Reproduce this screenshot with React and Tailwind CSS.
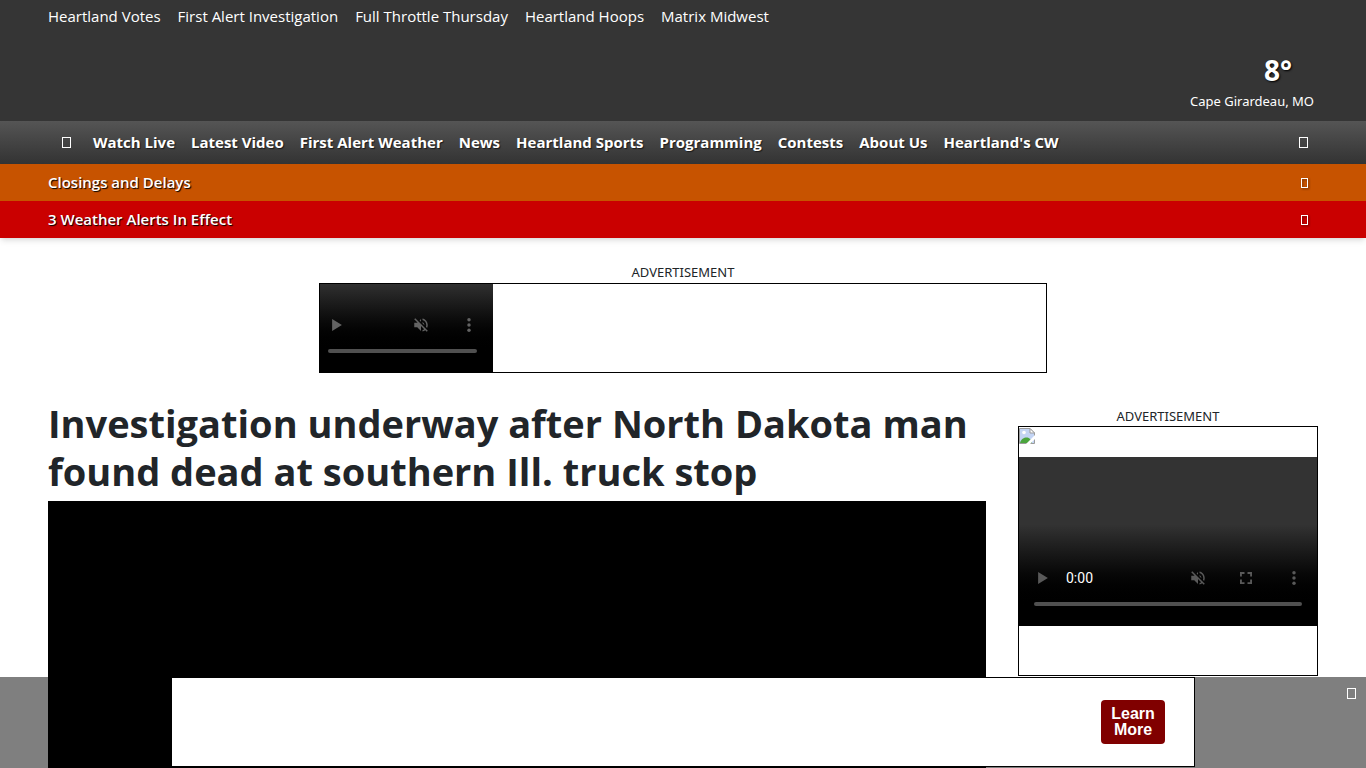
const topLinks = [
  "Heartland Votes",
  "First Alert Investigation",
  "Full Throttle Thursday",
  "Heartland Hoops",
  "Matrix Midwest",
];

const navLinks = [
  "Watch Live",
  "Latest Video",
  "First Alert Weather",
  "News",
  "Heartland Sports",
  "Programming",
  "Contests",
  "About Us",
  "Heartland's CW",
];

// Empty glyph box
function BoxGlyph({ className = "" }) {
  return (
    <svg className={className} width="9" height="11" viewBox="0 0 9 11" fill="none" stroke="currentColor">
      <rect x="0.5" y="0.5" width="8" height="10" />
    </svg>
  );
}

function SmallBoxGlyph() {
  return (
    <svg
      className="drop-shadow-[1px_1px_1px_rgba(0,0,0,0.5)]"
      width="7"
      height="10"
      viewBox="0 0 7 10"
      fill="none"
      stroke="currentColor"
    >
      <rect x="0.5" y="0.5" width="6" height="9" />
    </svg>
  );
}

function PlayIcon() {
  return (
    <svg width="18" height="18" viewBox="0 0 24 24" fill="currentColor">
      <path d="M5.500 4v16l13-8z" />
    </svg>
  );
}

function MutedIcon() {
  return (
    <svg width="18" height="18" viewBox="0 0 24 24" fill="currentColor">
      <path d="M4.34 2.93 2.93 4.34 7.29 8.7 7 9H3v6h4l5 5v-6.59l4.18 4.18c-.65.49-1.38.88-2.18 1.11v2.06a8.94 8.94 0 0 0 3.61-1.75l2.05 2.05 1.41-1.41L4.34 2.93zM19 12c0 .82-.15 1.61-.41 2.34l1.53 1.53c.56-1.17.88-2.48.88-3.87 0-4.28-2.99-7.86-7-8.77v2.06c2.89.86 5 3.54 5 6.71zm-7-8-1.88 1.88L12 7.76V4zm4.500 8A4.500 4.500 0 0 0 14 7.97v1.79l2.480 2.480c.01-.08.02-.16.02-.24z" />
    </svg>
  );
}

function FullscreenIcon() {
  return (
    <svg width="18" height="18" viewBox="0 0 24 24" fill="currentColor">
      <path d="M4 4h6v2.500H6.500V10H4zM14 4h6v6h-2.500V6.500H14zM4 14h2.500v3.500H10V20H4zM17.500 14H20v6h-6v-2.500h3.500z" />
    </svg>
  );
}

function MoreIcon() {
  return (
    <svg width="18" height="18" viewBox="0 0 24 24" fill="currentColor">
      <circle cx="12" cy="5" r="2.300" />
      <circle cx="12" cy="12" r="2.300" />
      <circle cx="12" cy="19" r="2.300" />
    </svg>
  );
}

function BrokenImage() {
  return (
    <svg width="16" height="16" viewBox="0 0 16 16" role="img" aria-label="Advertisement">
      <path d="M.5.5H11l4.500 4.500v10.500H.5z" fill="#c3d4f4" stroke="#9b9b9b" />
      <path d="M11 .5V5h4.500z" fill="#fff" stroke="#9b9b9b" />
      <circle cx="5" cy="4.500" r="1.800" fill="#fff" />
      <path d="M1 15c1-4 4-5.500 6.500-5.500S12 11 13 15z" fill="#4ba53e" />
      <path d="M16 7 7 16h4l5-5z" fill="#fff" />
    </svg>
  );
}

function ControlButton({ label, children }) {
  return (
    <button type="button" aria-label={label} className="flex size-8 items-center justify-center">
      {children}
    </button>
  );
}

function AlertBar({ label, className }) {
  return (
    <div className={`flex h-[37px] items-center justify-between pr-[58px] pl-12 ${className}`}>
      <a href="#" className="text-[15px] font-semibold text-shadow-[1px_1px_1px_rgb(0_0_0)]">
        {label}
      </a>
      <button type="button" aria-label={`Close ${label}`}>
        <SmallBoxGlyph />
      </button>
    </div>
  );
}

function Header() {
  return (
    <header className="bg-[#353535] text-white shadow-md">
      <div className="flex h-[121px] flex-col justify-between pr-[52px] pb-[9px] pl-12">
        <nav aria-label="Featured" className="flex h-8 items-center gap-[17px] text-[15px]">
          {topLinks.map((link) => (
            <a key={link} href="#">{link}</a>
          ))}
        </nav>
        <a href="#" className="flex flex-col self-end">
          <span className="self-end pr-[22px] text-[28px] leading-10 font-bold text-shadow-[1px_1px_2px_rgb(0_0_0)]">8°</span>
          <span className="font-['Noto_Sans',sans-serif] text-[13px] leading-[22px]">Cape Girardeau, MO</span>
        </a>
      </div>
      <div className="flex h-[43px] items-center justify-between bg-linear-to-b from-[#555] to-[#333] pr-[58px] pl-[62px]">
        <nav aria-label="Main" className="flex items-center gap-4 text-[15px] font-bold text-shadow-[1px_1px_1px_rgb(0_0_0/0.6)]">
          <a href="#" aria-label="Home" className="pr-1.5">
            <BoxGlyph />
          </a>
          {navLinks.map((link) => (
            <a key={link} href="#">{link}</a>
          ))}
        </nav>
        <button type="button" aria-label="Search">
          <BoxGlyph />
        </button>
      </div>
      <AlertBar label="Closings and Delays" className="bg-[#c75300]" />
      <AlertBar label="3 Weather Alerts In Effect" className="bg-[#ca0000]" />
    </header>
  );
}

function BannerAd() {
  return (
    <section className="mx-auto w-full max-w-[728px] pt-6">
      <p className="text-center font-['Noto_Sans',sans-serif] text-[13px] leading-[21px]">ADVERTISEMENT</p>
      <div className="h-[90px] border border-black">
        <div className="flex h-full w-[173px] flex-col justify-end bg-linear-to-b from-[#303030] to-black to-80% pb-[19px] text-[#636363]">
          <div className="flex items-center justify-between px-px">
            <ControlButton label="Play"><PlayIcon /></ControlButton>
            <div className="flex gap-4 pr-[7px]">
              <ControlButton label="Unmute"><MutedIcon /></ControlButton>
              <ControlButton label="More options"><MoreIcon /></ControlButton>
            </div>
          </div>
          <div className="mx-2 mt-2 mr-4 h-1 rounded-full bg-[#505050]" />
        </div>
      </div>
    </section>
  );
}

function SidebarAd() {
  return (
    <aside className="w-[300px] shrink-0 pt-[7px]">
      <p className="text-center font-['Noto_Sans',sans-serif] text-[13px] leading-5">ADVERTISEMENT</p>
      <div className="h-[250px] border border-black">
        <div className="h-[30px] pt-px">
          <BrokenImage />
        </div>
        <div className="flex h-[169px] flex-col justify-end bg-linear-to-b from-[#333] from-40% to-black to-90% pb-5 text-[#595959]">
          <div className="flex items-center justify-between pr-[7px] pl-2">
            <div className="flex items-center gap-[7px]">
              <ControlButton label="Play"><PlayIcon /></ControlButton>
              <span className="font-[Roboto,sans-serif] text-sm text-white">0:00</span>
            </div>
            <div className="flex gap-4">
              <ControlButton label="Unmute"><MutedIcon /></ControlButton>
              <ControlButton label="Full screen"><FullscreenIcon /></ControlButton>
              <ControlButton label="More options"><MoreIcon /></ControlButton>
            </div>
          </div>
          <div className="mx-[15px] mt-2 h-1 rounded-full bg-[#505050]" />
        </div>
      </div>
    </aside>
  );
}

function StickyAd() {
  return (
    <div className="fixed inset-x-0 bottom-0 bg-black/50 pb-px">
      <div className="mx-auto flex h-[90px] max-w-[1024px] items-center justify-end border border-black bg-white pr-[29px]">
        <a
          href="#"
          className="w-16 rounded bg-[#800000] px-2 py-1.5 text-center font-['Liberation_Sans',sans-serif] text-base leading-4 font-bold text-white"
        >
          Learn More
        </a>
      </div>
      <button type="button" aria-label="Close ad" className="absolute top-[11px] right-[10px] text-white">
        <BoxGlyph />
      </button>
    </div>
  );
}

export default function App() {
  return (
    <div className="min-h-screen bg-white font-['Open_Sans',sans-serif] text-[#212529]">
      <Header />
      <main>
        <BannerAd />
        <div className="flex gap-8 px-12 pt-[26px]">
          <article className="min-w-0 flex-1">
            <h1 className="mb-1.5 text-[38px] leading-12 font-bold">
              Investigation underway after North Dakota man found dead at southern Ill. truck stop
            </h1>
            <div className="aspect-video bg-black" />
          </article>
          <SidebarAd />
        </div>
      </main>
      <StickyAd />
    </div>
  );
}
